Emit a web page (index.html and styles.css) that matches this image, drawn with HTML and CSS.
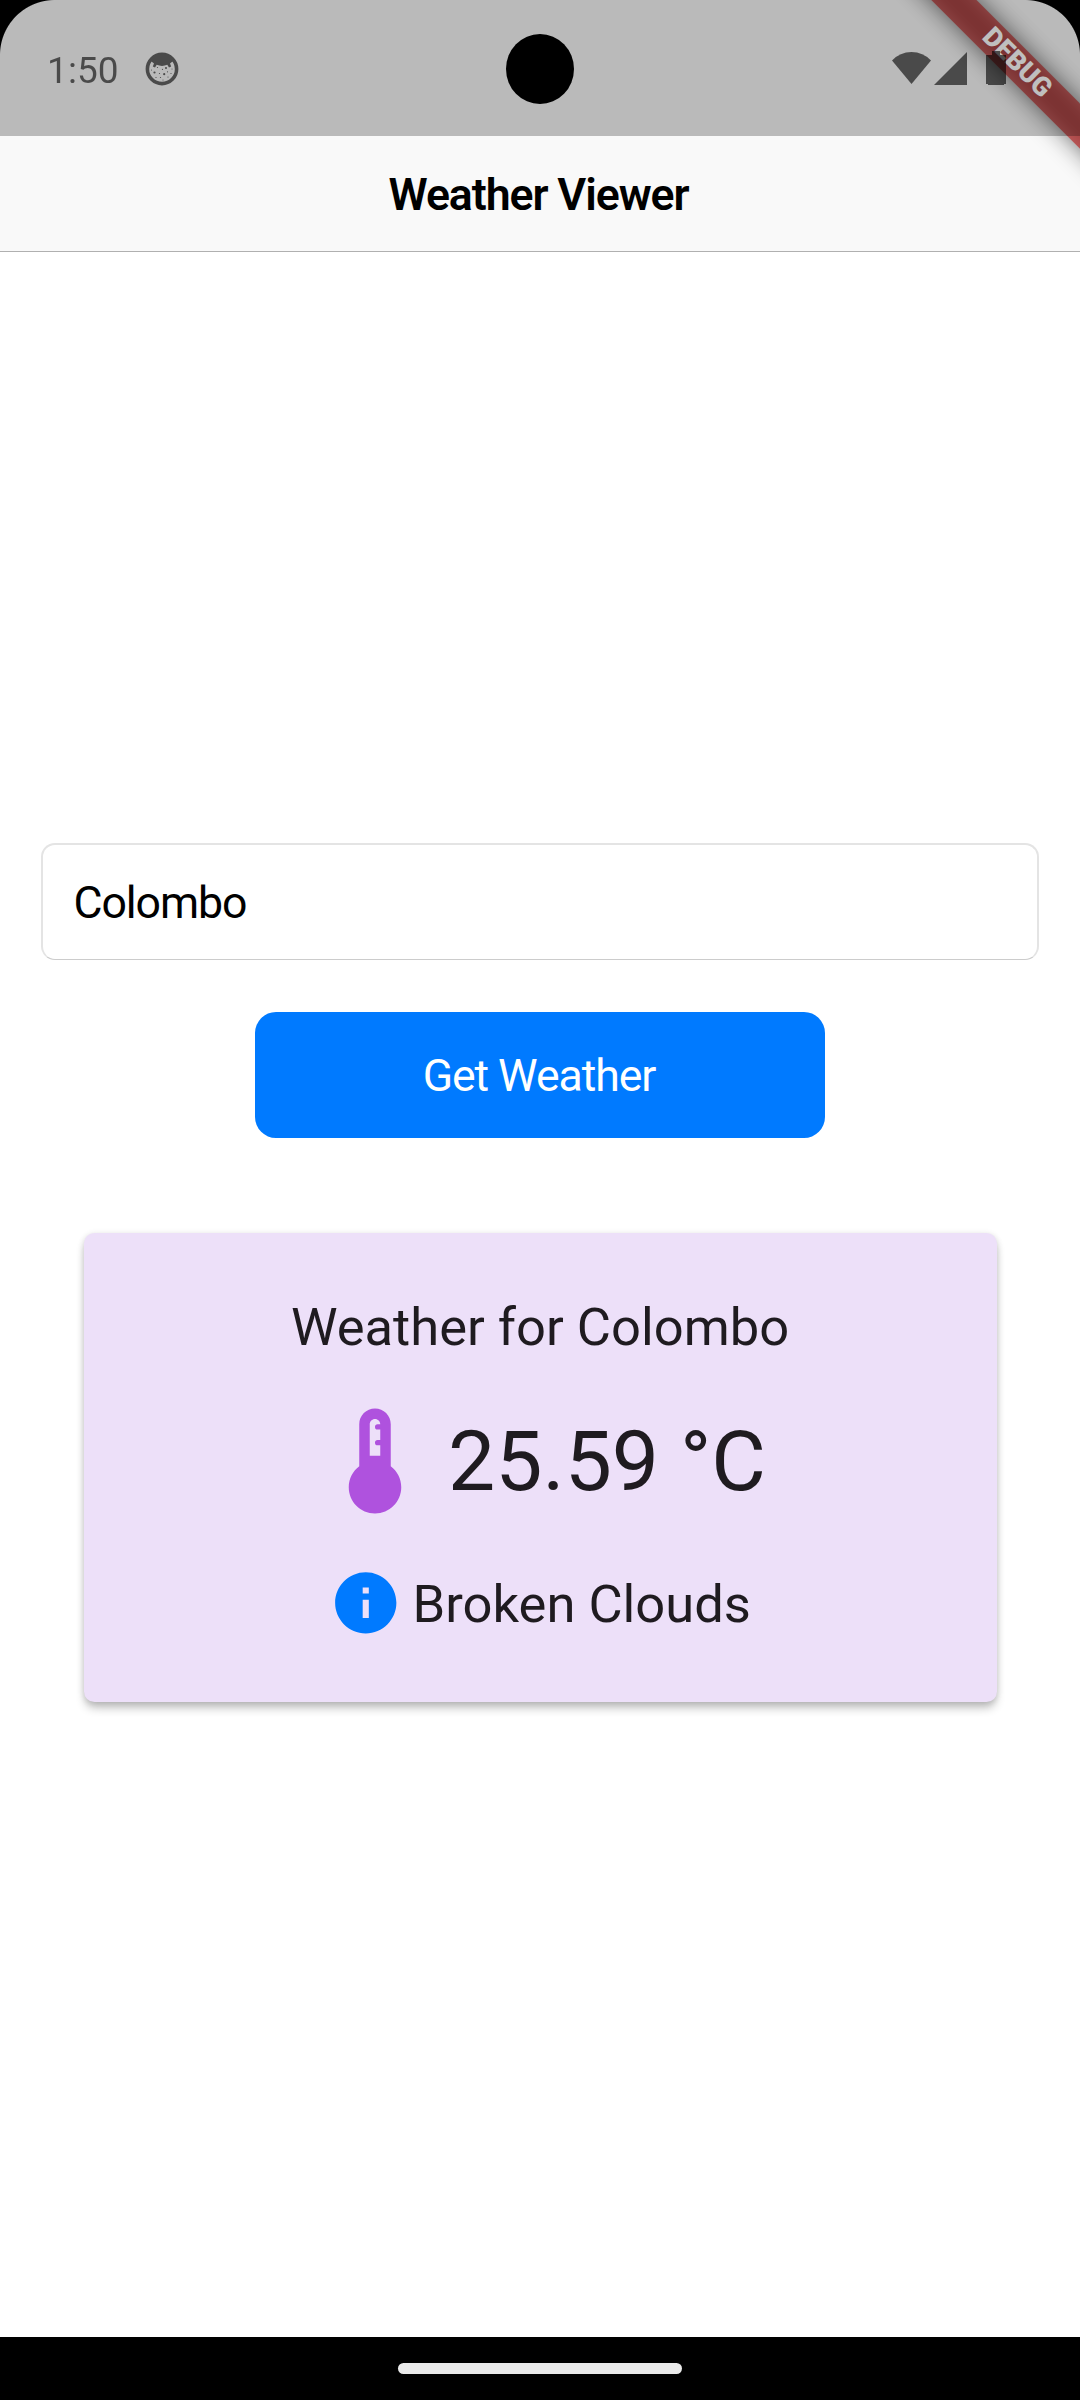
FILE: index.html
```html
<!DOCTYPE html>
<html lang="en">
<head>
<meta charset="utf-8">
<title>Weather Viewer</title>
<link rel="stylesheet" href="styles.css">
</head>
<body>
<div class="screen">
  <div class="status-bar">
    <span class="clock">1:50</span>
    <svg class="face" viewBox="0 0 34 34">
      <circle cx="17" cy="17" r="14.6" fill="none" stroke="#000" stroke-width="3.6"/>
      <path d="M5 8Q10 2 17 2T29 8L27.500 9.500L25 11.500L26.200 14.500L24 15.500L22.300 12.800Q17 15 11.700 12.800L10 15.500L7.800 14.500L9 11.500L6.500 9.500Z"/>
      <circle cx="9.500" cy="20.500" r="1.1"/><circle cx="19.200" cy="22.200" r="1.1"/><circle cx="21" cy="16" r="1"/>
      <circle cx="14.500" cy="21.500" r=".6"/><circle cx="12.500" cy="15.500" r=".6"/><circle cx="17.500" cy="17.300" r=".6"/><circle cx="22.500" cy="19.800" r=".6"/><circle cx="26" cy="21.500" r=".6"/><circle cx="11" cy="25.500" r=".6"/><circle cx="15.500" cy="25.500" r=".6"/><circle cx="23" cy="25" r=".6"/><circle cx="18" cy="28" r=".5"/><circle cx="6.500" cy="18" r=".5"/><circle cx="27" cy="17" r=".5"/>
    </svg>
    <div class="signals">
      <svg class="wifi" viewBox="0 0 40 34"><path d="M1 9.500Q9 1 20.500 1T40 9.500L20.500 33Z"/></svg>
      <svg class="cell" viewBox="0 0 33 34"><path d="M33 1V34H0Z"/></svg>
      <svg class="battery" viewBox="0 0 20 34"><path d="M6 0H14V4H20V33H18V34H2V33H0V4H6Z"/></svg>
    </div>
  </div>
  <header class="nav-bar">Weather Viewer</header>
  <main class="content">
    <div class="city-field">Colombo</div>
    <button class="action">Get Weather</button>
    <section class="card">
      <div class="heading">Weather for Colombo</div>
      <div class="temp-row">
        <svg class="thermometer" viewBox="0 0 24 24"><path d="M15 13V5c0-1.660-1.340-3-3-3S9 3.340 9 5v8c-1.210.910-2 2.370-2 4 0 2.760 2.240 5 5 5s5-2.240 5-5c0-1.630-.790-3.090-2-4zM11 11V5c0-.550.450-1 1-1s1 .450 1 1h-.500a.5.500 0 0 0 0 1h.500v2h-.500a.5.500 0 0 0 0 1h.500v2h-2z"/></svg>
        <span class="temperature">25.59 °C</span>
      </div>
      <div class="condition-row">
        <svg class="info" viewBox="0 0 24 24"><path d="M12 2C6.480 2 2 6.480 2 12s4.480 10 10 10 10-4.480 10-10S17.520 2 12 2zm1 15h-2v-6h2v6zm0-8h-2V7h2v2z"/></svg>
        <span class="condition">Broken Clouds</span>
      </div>
    </section>
  </main>
  <footer class="gesture-bar"><div class="pill"></div></footer>
  <div class="banner-clip">
    <div class="banner-shadow"></div>
    <div class="banner">DEBUG</div>
  </div>
  <div class="scrim"></div>
  <div class="camera"></div>
  <div class="corner corner-left"></div>
  <div class="corner corner-right"></div>
</div>
</body>
</html>
```
FILE: styles.css
```css
* { box-sizing: border-box; }
body { margin: 0; background: #fff; font-family: Roboto, sans-serif; }
svg { display: block; flex: none; }

.screen {
  position: relative;
  width: 1080px;
  height: 2400px;
  overflow: hidden;
  display: flex;
  flex-direction: column;
  background: #fff;
}

.status-bar {
  position: relative;
  z-index: 3;
  height: 136px;
  flex: none;
  display: flex;
  align-items: flex-start;
  padding: 51px 74px 0 47px;
  opacity: .6;
}
.clock { font-size: 37px; line-height: 39px; width: 98px; letter-spacing: .1px; }
.face { width: 34px; height: 34px; margin-top: 1px; }
.signals { display: flex; margin-left: auto; }
.wifi { width: 40px; height: 34px; margin-right: 3px; }
.cell { width: 33px; height: 34px; margin-right: 19px; }
.battery { width: 20px; height: 34px; }

.nav-bar {
  height: 252px;
  margin-top: -136px;
  padding: 136px 3px 0 0;
  flex: none;
  background: #f9f9f9;
  border-bottom: 1px solid #b0b0b0;
  text-align: center;
  font-size: 44.625px;
  font-weight: 600;
  line-height: 119px;
  letter-spacing: -1.08px;
}

.content { flex: 1; display: flex; flex-direction: column; align-items: center; padding-top: 591px; }

.city-field {
  width: 998px;
  height: 117px;
  border: 2px solid #e4e4e4;
  border-bottom: 1px solid #ccc;
  border-radius: 14px;
  padding-left: 30.5px;
  font-size: 44.625px;
  line-height: 116px;
  letter-spacing: -1.08px;
}

.action {
  width: 570px;
  height: 126px;
  margin-top: 52px;
  padding: 1px 2px 0 0;
  border: 0;
  border-radius: 21px;
  background: #007aff;
  color: #fff;
  font: 400 44.625px/126px Roboto, sans-serif;
  letter-spacing: -1.08px;
}

.card {
  width: 913px;
  height: 469px;
  margin-top: 95px;
  padding-top: 57px;
  display: flex;
  flex-direction: column;
  align-items: center;
  border-radius: 10.5px;
  background: #ede0f9;
  color: #1f1b20;
  box-shadow: 0 7px 10px -1px rgba(0,0,0,.24), 0 1px 6px rgba(0,0,0,.12);
}
.heading, .condition { font-size: 52.5px; line-height: 75px; }
.temp-row { display: flex; align-items: center; height: 126px; margin-top: 33px; padding-right: 2px; gap: 10px; }
.thermometer { width: 126px; height: 126px; fill: #af52de; }
.temperature { font-size: 84px; line-height: 120px; padding-top: 1px; }
.condition-row { display: flex; align-items: flex-start; height: 75px; margin-top: 42px; gap: 10px; }
.info { width: 73.5px; height: 73.5px; fill: #007aff; }
.condition { padding-top: 1px; }

.gesture-bar { height: 63px; flex: none; background: #000; padding-top: 26px; }
.pill { width: 284px; height: 11px; margin: 0 auto; border-radius: 6px; background: #eaeaea; }

.banner-clip { position: absolute; z-index: 1; top: 0; right: 0; width: 260px; height: 260px; overflow: hidden; }
.banner, .banner-shadow {
  position: absolute;
  left: 47px;
  top: 47px;
  width: 300px;
  height: 31.5px;
  transform: rotate(45deg);
}
.banner-shadow { background: rgba(0,0,0,.55); filter: blur(12.5px); }
.banner {
  background: rgba(183,28,28,.63);
  color: #fff;
  font-size: 26.775px;
  font-weight: 900;
  line-height: 31.5px;
  text-align: center;
}
.scrim { position: absolute; z-index: 2; top: 0; left: 0; right: 0; height: 136px; background: rgba(0,0,0,.25); }
.camera { position: absolute; z-index: 4; left: 506px; top: 34px; width: 68px; height: 70px; border-radius: 50%; background: #000; }
.corner { position: absolute; z-index: 4; top: 0; width: 55px; height: 55px; }
.corner-left { left: 0; background: radial-gradient(circle at 100% 100%, transparent 54.5px, #000 55.5px); }
.corner-right { right: 0; background: radial-gradient(circle at 0 100%, transparent 54.5px, #000 55.5px); }
```
